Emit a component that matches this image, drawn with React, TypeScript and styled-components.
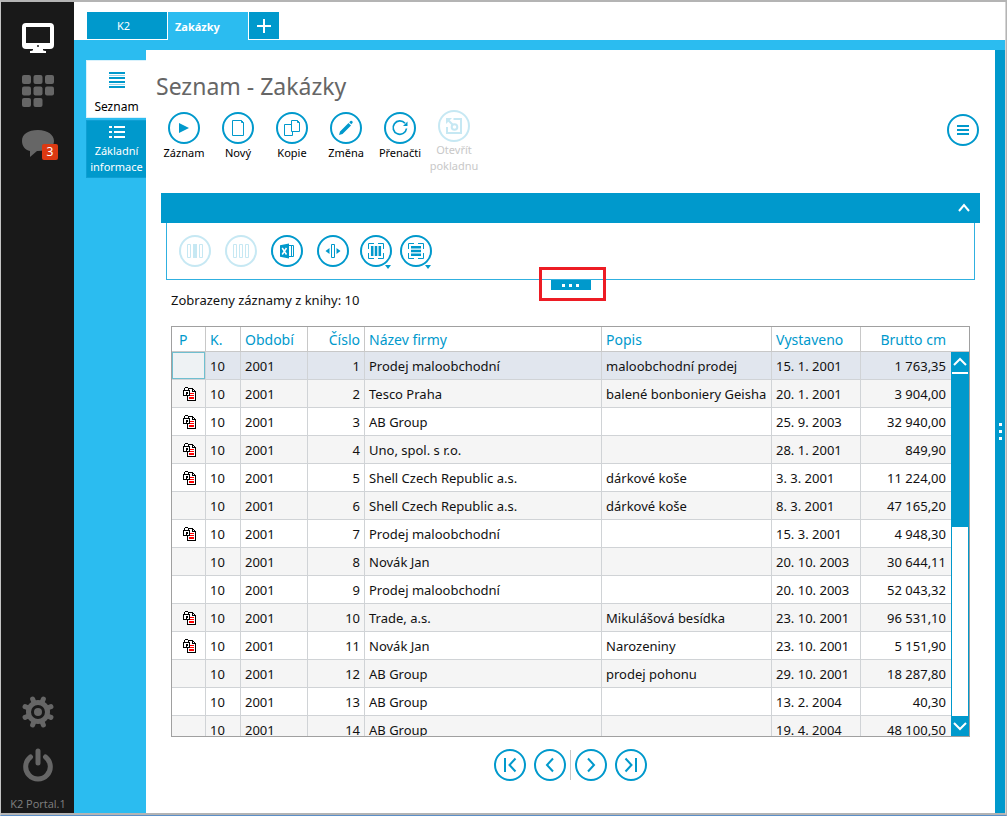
import React from 'react';
import styled, { createGlobalStyle, css } from 'styled-components';

const BLUE = '#0099cc';
const SKY = '#2bbcf0';
const INK = '#111';

const GlobalStyle = createGlobalStyle`
  *, *::before, *::after { box-sizing: border-box; }
  body { margin: 0; background: #fff; font-family: 'Noto Sans', 'Open Sans', sans-serif; color: ${INK}; }
  button { font: inherit; color: inherit; background: none; border: 0; padding: 0; margin: 0; cursor: pointer; }
  button:disabled { cursor: default; }
  svg { display: block; flex: none; }
`;

const Window = styled.div`
  display: flex;
  height: 100vh;
  border-top: 2px solid #b4b4b4;
  border-left: 1px solid #c4c4c4;
  border-right: 1px solid #b4b4b4;
  border-bottom: 1px solid #5b8fc8;
`;

const Body = styled.div`
  display: flex;
  flex: 1;
  min-width: 0;
  border-right: 1px solid #d4d4d4;
  border-bottom: 2px solid #b4b4b4;
`;

const Sidebar = styled.nav`
  display: flex;
  flex-direction: column;
  align-items: center;
  flex: none;
  width: 73px;
  padding: 19px 0 2px 1px;
  gap: 19px;
  background: #191919;
  color: #666;
`;

const SideButton = styled.button<{ $active?: boolean }>`
  position: relative;
  display: grid;
  place-items: center;
  width: 34px;
  height: 34px;
  color: ${(p) => (p.$active ? '#fff' : '#666')};
`;

const Badge = styled.span`
  position: absolute;
  right: -3px;
  bottom: 1px;
  width: 16px;
  height: 16px;
  border-radius: 2px;
  background: #dc3912;
  color: #fff;
  font-size: 12px;
  line-height: 16px;
  text-align: center;
`;

const SideFoot = styled.div`
  display: flex;
  flex-direction: column;
  align-items: center;
  gap: 19px;
  margin-top: auto;
`;

const Version = styled.span`
  margin-top: -4px;
  font: 11px/14px 'Open Sans', sans-serif;
  color: #808080;
`;

const Workspace = styled.div`
  display: flex;
  flex-direction: column;
  flex: 1;
  min-width: 0;
`;

const TabBar = styled.div`
  display: flex;
  gap: 1px;
  flex: none;
  height: 38px;
  padding: 10px 13px 0;
`;

const Tab = styled.button<{ $active?: boolean }>`
  width: 80px;
  height: ${(p) => (p.$active ? 28 : 27)}px;
  padding: ${(p) => (p.$active ? '0 7px' : '0 14px 0 7px')};
  background: ${(p) => (p.$active ? SKY : BLUE)};
  color: #fff;
  font-size: 11px;
  font-weight: ${(p) => (p.$active ? 700 : 400)};
  text-align: ${(p) => (p.$active ? 'left' : 'center')};
`;

const AddTab = styled.button`
  display: grid;
  place-items: center;
  width: 30px;
  height: 27px;
  background: ${BLUE};
  color: #fff;
`;

const Frame = styled.div`
  display: flex;
  flex: 1;
  min-height: 0;
  padding-top: 10px;
  background: ${SKY};
`;

const ViewList = styled.nav`
  display: flex;
  flex-direction: column;
  gap: 2px;
  flex: none;
  width: 72px;
  padding: 10px 0 0 12px;
`;

const ViewButton = styled.button<{ $active?: boolean }>`
  display: flex;
  flex-direction: column;
  align-items: center;
  height: 58px;
  font-size: ${(p) => (p.$active ? 12 : 11)}px;
  line-height: 16px;
  border: 1px solid ${(p) => (p.$active ? '#d9f2fc' : '#0f9fd3')};
  border-right: 0;
  ${(p) =>
    p.$active
      ? css`background: #fff; color: #000; padding-top: 10px; gap: 10px; svg { color: ${BLUE}; }`
      : css`background: ${BLUE}; color: #fff; padding-top: 5px; gap: 5px;`}
`;

const Main = styled.main`
  display: flex;
  flex-direction: column;
  flex: 1;
  min-width: 0;
  padding: 20px 15px 0;
  background: #fff;
`;

const Splitter = styled.div`
  display: flex;
  flex-direction: column;
  align-items: center;
  justify-content: center;
  gap: 4px;
  flex: none;
  width: 10px;
  background: ${BLUE};
`;

const Dot = styled.i`
  width: 3px;
  height: 3px;
  background: #fff;
`;

const Title = styled.h1`
  margin: 0 0 0 -5px;
  font-size: 23px;
  line-height: 32px;
  font-weight: 400;
  color: #666;
`;

const Toolbar = styled.div`
  display: flex;
  align-items: flex-start;
  height: 91px;
  padding-top: 10px;
  margin-left: -4px;
`;

const Tool = styled.button`
  display: flex;
  flex-direction: column;
  align-items: center;
  gap: 1px;
  width: 54px;
  font-size: 11px;
  line-height: 16px;
  color: #000;
  &:disabled { color: #c8c8c8; margin-top: -2px; gap: 0; }
`;

const Ring = styled.span<{ $dim?: boolean }>`
  display: grid;
  place-items: center;
  width: 32px;
  height: 32px;
  border: 2px solid;
  border-radius: 50%;
  color: ${BLUE};
  opacity: ${(p) => (p.$dim ? 0.22 : 1)};
`;

const MenuButton = styled.button`
  margin: 2px 1px 0 auto;
`;

const PanelHead = styled.div`
  display: flex;
  align-items: center;
  justify-content: flex-end;
  flex: none;
  height: 30px;
  padding-right: 10px;
  background: ${BLUE};
  color: #fff;
`;

const Panel = styled.div`
  position: relative;
  display: flex;
  align-items: center;
  flex: none;
  gap: 14px;
  height: 57px;
  margin: 0 5px;
  padding-left: 12px;
  border: 1px solid #30b0e0;
  border-top: 0;
`;

const RingButton = styled.button`
  position: relative;
`;

const Pair = styled.div`
  display: flex;
  gap: 8px;
  margin-left: -3px;
`;

const Caret = styled.i`
  position: absolute;
  right: 1px;
  bottom: -2px;
  border: 3px solid transparent;
  border-top: 4px solid ${BLUE};
  border-bottom: 0;
`;

const Highlight = styled.div`
  position: absolute;
  left: calc(50% - 32px);
  bottom: -22px;
  width: 67px;
  height: 34px;
  padding: 10px 9px 0;
  border: 3px solid #ed1c24;
`;

const Grip = styled.button`
  display: flex;
  align-items: center;
  justify-content: center;
  gap: 4px;
  width: 40px;
  height: 10px;
  background: ${BLUE};
`;

const Count = styled.p`
  margin: 10px 10px 16px;
  font-size: 13px;
  line-height: 20px;
`;

const Grid = styled.div`
  position: relative;
  flex: none;
  height: 411px;
  margin: 0 10px;
  border: 1px solid #a0a0a0;
  overflow: hidden;
`;

const Table = styled.table`
  width: 100%;
  table-layout: fixed;
  border-collapse: separate;
  border-spacing: 0;
  font-size: 13px;
`;

const Th = styled.th<{ $right?: boolean; $first?: boolean; $last?: boolean }>`
  height: 25px;
  padding: ${(p) => (p.$last ? '2px 23px 0 4px' : p.$first ? '2px 4px 0 7px' : '2px 4px 0')};
  border-right: ${(p) => (p.$last ? 0 : 1)}px solid #c8c8c8;
  border-bottom: 1px solid #c8c8c8;
  font-size: 14px;
  font-weight: 400;
  line-height: 20px;
  color: ${BLUE};
  text-align: ${(p) => (p.$right ? 'right' : 'left')};
  white-space: nowrap;
`;

const Row = styled.tr<{ $selected?: boolean }>`
  background: ${(p) => (p.$selected ? '#e1e6ee' : '#fff')};
  &:nth-child(even) { background: #f5f5f5; }
`;

const Td = styled.td<{ $right?: boolean; $last?: boolean; $focus?: boolean }>`
  height: 28px;
  padding: ${(p) => (p.$last ? '1px 23px 0 4px' : p.$right ? '1px 4px 0' : '0 4px')};
  border-right: ${(p) => (p.$last ? 0 : 1)}px solid #d0d3d6;
  border-bottom: 1px solid #d0d3d6;
  line-height: 20px;
  color: ${INK};
  text-align: ${(p) => (p.$right ? 'right' : 'left')};
  white-space: nowrap;
  ${(p) => p.$focus && css`background: #eef2f4; box-shadow: inset 0 0 0 1px #6fbfd0;`}
  svg { margin: 0 auto; }
`;

const Scroll = styled.div`
  position: absolute;
  top: 25px;
  right: 0;
  bottom: 0;
  display: flex;
  flex-direction: column;
  width: 18px;
  border: solid ${BLUE};
  border-width: 0 1px;
  background: #fff;
`;

const ScrollButton = styled.button`
  display: grid;
  place-items: center;
  height: 20px;
  background: ${BLUE};
  color: #fff;
`;

const Thumb = styled.div`
  height: 153px;
  margin: 2px 0 auto;
  background: ${BLUE};
`;

const Pager = styled.div`
  display: flex;
  justify-content: center;
  gap: 8px;
  padding-top: 12px;
`;

const Sep = styled.i`
  width: 1px;
  height: 30px;
  margin: 1px -4px 0;
  background: #c8c8c8;
`;

const Icon = ({ size = 20, children }: { size?: number; children: React.ReactNode }) => (
  <svg width={size} height={size} viewBox={`0 0 ${size} ${size}`} fill="none" stroke="currentColor" strokeWidth="1" aria-hidden="true">
    {children}
  </svg>
);

const TOOLS = [
  { label: 'Záznam', icon: <path d="M5 5l10 5-10 5z" fill="currentColor" stroke="none" /> },
  { label: 'Nový', icon: <path d="M4.500 2.500h9l2 2v13h-11zM13.500 2.500v2h2" /> },
  { label: 'Kopie', icon: <path d="M9.500 2.500h6l2 2v9h-8zM15.500 2.500v2h2M9.500 6.500h-7v11h8v-4" /> },
  { label: 'Změna', icon: <path d="M3 17l1-3.500 8.500-8.500 2.500 2.500L6.500 16zM13.200 4.300l1.300-1.300q1-.6 1.800.200t.2 1.800L15.200 6.300z" fill="currentColor" stroke="none" /> },
  { label: 'Přenačti', icon: <><path d="M16.500 10.500A6.700 6.700 0 1 1 15 5.300" strokeWidth="1.700" /><path d="M17.500 3.500v4.500H13z" fill="currentColor" stroke="none" /></> },
];

const COLUMNS = [
  { name: 'P', width: 34 },
  { name: 'K.', width: 35 },
  { name: 'Období', width: 67 },
  { name: 'Číslo', width: 57, right: true },
  { name: 'Název firmy' },
  { name: 'Popis', width: 170 },
  { name: 'Vystaveno', width: 89 },
  { name: 'Brutto cm', width: 108, right: true },
];

const ROWS: [boolean, string, string, string, string][] = [
  [false, 'Prodej maloobchodní', 'maloobchodní prodej', '15. 1. 2001', '1 763,35'],
  [true, 'Tesco Praha', 'balené bonboniery Geisha', '20. 1. 2001', '3 904,00'],
  [true, 'AB Group', '', '25. 9. 2003', '32 940,00'],
  [true, 'Uno, spol. s r.o.', '', '28. 1. 2001', '849,90'],
  [true, 'Shell Czech Republic a.s.', 'dárkové koše', '3. 3. 2001', '11 224,00'],
  [false, 'Shell Czech Republic a.s.', 'dárkové koše', '8. 3. 2001', '47 165,20'],
  [true, 'Prodej maloobchodní', '', '15. 3. 2001', '4 948,30'],
  [false, 'Novák Jan', '', '20. 10. 2003', '30 644,11'],
  [false, 'Prodej maloobchodní', '', '20. 10. 2003', '52 043,32'],
  [true, 'Trade, a.s.', 'Mikulášová besídka', '23. 10. 2001', '96 531,10'],
  [true, 'Novák Jan', 'Narozeniny', '23. 10. 2001', '5 151,90'],
  [false, 'AB Group', 'prodej pohonu', '29. 10. 2001', '18 287,80'],
  [false, 'AB Group', '', '13. 2. 2004', '40,30'],
  [false, 'AB Group', '', '19. 4. 2004', '48 100,50'],
];

const LockedDoc = () => (
  <svg width="16" height="14" viewBox="-2 0 16 14" role="img" aria-label="Uzamčeno" shapeRendering="crispEdges">
    <path d="M4 1h6v1h1v1h1v1h1v10H4z" fill="#000" />
    <path d="M5 2h4v3h3v8H5z" fill="#fff" />
    <path d="M10 3h1v1h-1z" fill="#fff" />
    <path d="M7 6h4v1H7zM6 8h5v1H6zM6 10h5v1H6zM6 12h5v-1H6z" fill="#f00" />
    <path d="M0 3h1V1h1V0h3v1h1v2h1v6H0z" fill="#000" />
    <path d="M2 1h3v2H2zM1 4h5v4H1z" fill="#fff" />
    <path d="M3 5h2v2H4v1H3z" fill="#000" />
  </svg>
);

const PAGER = [
  { label: 'První', d: 'M5 3v14M15.500 3.500 9.500 10l6 6.500' },
  { label: 'Předchozí', d: 'M13 3.500 7 10l6 6.500' },
  { label: 'Další', d: 'M7 3.500 13 10l-6 6.500' },
  { label: 'Poslední', d: 'M4.500 3.500 10.500 10l-6 6.500M15 3v14' },
];

const PagerButton = ({ label, d }: { label: string; d: string }) => (
  <button aria-label={label}>
    <Ring><Icon><path d={d} strokeWidth="2" /></Icon></Ring>
  </button>
);

const corners = <path d="M8 2.500H2.500V8M12 2.500h5.500V8M2.500 12v5.500H8M17.500 12v5.500H12" />;

export default function App() {
  return (
    <>
      <GlobalStyle />
      <Window>
        <Body>
          <Sidebar>
            <SideButton $active aria-label="Plocha">
              <svg width="32" height="32" viewBox="0 0 32 32" fill="currentColor">
                <path fillRule="evenodd" d="M4 1h24a4 4 0 0 1 4 4v18a4 4 0 0 1-4 4h-7v1q0 1 3 1v2H8v-2q3 0 3-1v-1H4a4 4 0 0 1-4-4V5a4 4 0 0 1 4-4zM4 5v16h24V5z" />
                <circle cx="16" cy="24" r="1" fill="#191919" />
              </svg>
            </SideButton>
            <SideButton aria-label="Aplikace">
              <svg width="32" height="32" viewBox="0 0 32 32" fill="currentColor">
                {[0, 1, 2, 3, 4, 5, 6, 7].map((i) => (
                  <rect key={i} x={(i % 3) * 11.5} y={Math.floor(i / 3) * 11.5} width="9" height="9" rx="2" />
                ))}
              </svg>
            </SideButton>
            <SideButton aria-label="Zprávy">
              <svg width="32" height="32" viewBox="0 0 32 32" fill="currentColor">
                <path d="M16 2C6 2 0 6 0 13c0 5 3 9 8 10v6l7-6h1c10 0 16-4 16-10S26 2 16 2z" />
              </svg>
              <Badge>3</Badge>
            </SideButton>
            <SideFoot>
              <SideButton aria-label="Nastavení">
                <svg width="34" height="34" viewBox="0 0 34 34" fill="none" stroke="currentColor">
                  <circle cx="17" cy="17" r="9.500" strokeWidth="5" />
                  <circle cx="17" cy="17" r="4" fill="currentColor" stroke="none" />
                  {[22.5, 67.5, 112.5, 157.5, 202.5, 247.5, 292.5, 337.5].map((a) => (
                    <path key={a} d="M17 6V3" strokeWidth="5" strokeLinecap="round" transform={`rotate(${a} 17 17)`} />
                  ))}
                </svg>
              </SideButton>
              <SideButton aria-label="Odhlásit">
                <svg width="34" height="34" viewBox="0 0 34 34" fill="none" stroke="currentColor" strokeWidth="5" strokeLinecap="round">
                  <path d="M17 3v12M9.500 9a12.300 12.300 0 1 0 15 0" />
                </svg>
              </SideButton>
              <Version>K2 Portal.1</Version>
            </SideFoot>
          </Sidebar>

          <Workspace>
            <TabBar>
              <Tab>K2</Tab>
              <Tab $active>Zakázky</Tab>
              <AddTab aria-label="Přidat záložku">
                <Icon size={14}><path d="M7 0v14M0 7h14" strokeWidth="2" /></Icon>
              </AddTab>
            </TabBar>
            <Frame>
              <ViewList>
                <ViewButton $active>
                  <svg width="16" height="18" viewBox="0 0 16 18" stroke="currentColor" strokeWidth="2">
                    <path d="M0 2h16M0 7h16M0 11h16M0 16h16" />
                    <path d="M0 4.500h16M0 13.500h16" strokeWidth="1" opacity="0.4" />
                  </svg>
                  Seznam
                </ViewButton>
                <ViewButton>
                  <svg width="16" height="12" viewBox="0 0 16 12" stroke="currentColor" strokeWidth="2">
                    <path d="M0 1h3M5 1h11M0 6h3M5 6h11M0 11h3M5 11h11" />
                  </svg>
                  <span>Základní informace</span>
                </ViewButton>
              </ViewList>

              <Main>
                <Title>Seznam - Zakázky</Title>
                <Toolbar>
                  {TOOLS.map((t) => (
                    <Tool key={t.label}>
                      <Ring><Icon>{t.icon}</Icon></Ring>
                      {t.label}
                    </Tool>
                  ))}
                  <Tool disabled>
                    <Ring $dim>
                      <Icon>
                        <path d="M9.500 3H17v14H3v-6" strokeWidth="2" />
                        <circle cx="10.500" cy="11" r="2.800" strokeWidth="2" />
                        <path d="M3 3l5.500 5.500" strokeWidth="2" />
                        <path d="M2 2h6L2 8z" fill="currentColor" stroke="none" />
                      </Icon>
                    </Ring>
                    Otevřít pokladnu
                  </Tool>
                  <MenuButton aria-label="Nabídka">
                    <Ring><Icon><path d="M4 6h12M4 10h12M4 14h12" strokeWidth="2" /></Icon></Ring>
                  </MenuButton>
                </Toolbar>

                <PanelHead>
                  <button aria-label="Sbalit panel"><Icon size={12}><path d="M1 9l5-6 5 6" strokeWidth="2" /></Icon></button>
                </PanelHead>
                <Panel>
                  <RingButton disabled aria-label="Sloupce">
                    <Ring $dim><Icon><path d="M2.500 3.500h3v13h-3zM14.500 3.500h3v13h-3z" /><path d="M8 3h4v14H8z" fill="currentColor" stroke="none" /></Icon></Ring>
                  </RingButton>
                  <RingButton disabled aria-label="Všechny sloupce">
                    <Ring $dim><Icon><path d="M2.500 3.500h3v13h-3zM8.500 3.500h3v13h-3zM14.500 3.500h3v13h-3z" /></Icon></Ring>
                  </RingButton>
                  <RingButton aria-label="Export do Excelu">
                    <Ring>
                      <Icon>
                        <path d="M3 4.200 12 2.500v15l-9-1.700z" fill="currentColor" stroke="none" />
                        <path d="M12 4.500h4.500v11H12M14.500 5v10" />
                        <path d="M5.200 7l4.300 6.500M9.500 7l-4.300 6.500" stroke="#fff" strokeWidth="1.500" />
                      </Icon>
                    </Ring>
                  </RingButton>
                  <RingButton aria-label="Šířka sloupců">
                    <Ring><Icon><path d="M8.500 3.500h3v13h-3z" /><path d="M6.500 7v6L2.500 10zM13.500 7v6l4-3z" fill="currentColor" stroke="none" /></Icon></Ring>
                  </RingButton>
                  <Pair>
                    <RingButton aria-label="Výběr sloupců">
                      <Ring><Icon>{corners}<path d="M6.200 5v10M10 5v10M13.800 5v10" strokeWidth="2.500" /></Icon></Ring>
                      <Caret />
                    </RingButton>
                    <RingButton aria-label="Výběr řádků">
                      <Ring><Icon>{corners}<path d="M5 6.200h10M5 10h10M5 13.800h10" strokeWidth="2.500" /></Icon></Ring>
                      <Caret />
                    </RingButton>
                  </Pair>
                  <Highlight>
                    <Grip aria-label="Rozbalit panel"><Dot /><Dot /><Dot /></Grip>
                  </Highlight>
                </Panel>

                <Count>Zobrazeny záznamy z knihy: 10</Count>

                <Grid>
                  <Table>
                    <colgroup>
                      {COLUMNS.map((c) => <col key={c.name} width={c.width} />)}
                    </colgroup>
                    <thead>
                      <tr>
                        {COLUMNS.map((c, i) => (
                          <Th key={c.name} scope="col" $right={c.right} $first={i === 0} $last={i === 7}>{c.name}</Th>
                        ))}
                      </tr>
                    </thead>
                    <tbody>
                      {ROWS.map(([locked, firm, note, date, total], i) => (
                        <Row key={i} $selected={i === 0}>
                          <Td $focus={i === 0}>{locked && <LockedDoc />}</Td>
                          <Td>10</Td>
                          <Td>2001</Td>
                          <Td $right>{i + 1}</Td>
                          <Td>{firm}</Td>
                          <Td>{note}</Td>
                          <Td>{date}</Td>
                          <Td $right $last>{total}</Td>
                        </Row>
                      ))}
                    </tbody>
                  </Table>
                  <Scroll>
                    <ScrollButton aria-label="Nahoru"><Icon size={16}><path d="M2 11l6-6 6 6" strokeWidth="2" /></Icon></ScrollButton>
                    <Thumb />
                    <ScrollButton aria-label="Dolů"><Icon size={16}><path d="M2 5l6 6 6-6" strokeWidth="2" /></Icon></ScrollButton>
                  </Scroll>
                </Grid>

                <Pager>
                  <PagerButton {...PAGER[0]} />
                  <PagerButton {...PAGER[1]} />
                  <Sep />
                  <PagerButton {...PAGER[2]} />
                  <PagerButton {...PAGER[3]} />
                </Pager>
              </Main>
              <Splitter><Dot /><Dot /><Dot /></Splitter>
            </Frame>
          </Workspace>
        </Body>
      </Window>
    </>
  );
}
